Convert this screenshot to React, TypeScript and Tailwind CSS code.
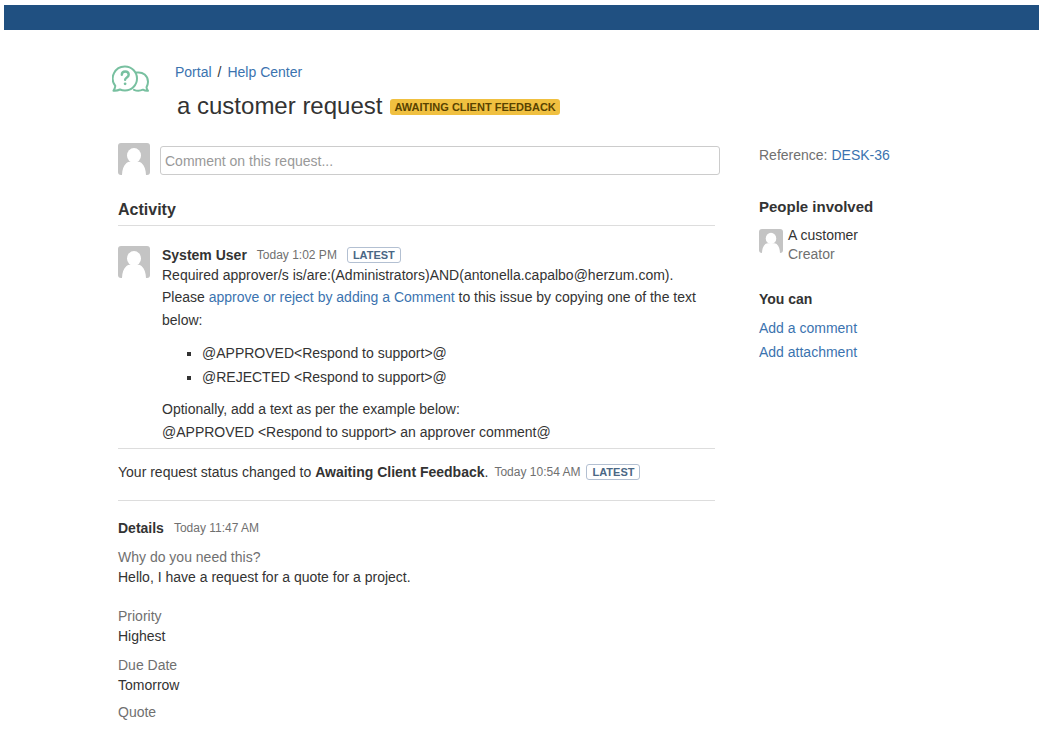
import React from 'react';

interface AvatarProps {
  className: string;
}

const Avatar: React.FC<AvatarProps> = ({ className }) => (
  <svg viewBox="0 0 32 32" className={`shrink-0 rounded-[3px] ${className}`} aria-hidden="true">
    <rect width="32" height="32" fill="#c4c4c4" />
    <ellipse cx="16" cy="12.500" rx="7" ry="7.500" fill="#fff" />
    <path d="M4 32c.2-5 1.500-9.500 4.500-12 1.400-1.100 3-1.300 4.700-1h5.600c1.700-.3 3.300-.1 4.700 1 3 2.500 4.300 7 4.500 12z" fill="#fff" />
  </svg>
);

const PortalLogo: React.FC = () => (
  <svg viewBox="0 0 38 28" className="w-[38px] h-7 shrink-0" fill="none" stroke="#78c0a0" strokeWidth="2" strokeLinejoin="round" strokeLinecap="round" aria-hidden="true">
    <path d="M13 1.500a12 12 0 1 1 0 24c-2 0-3.500-.3-5-1-2 1-4.500 1.400-6.500 1.200 1-1.300 1.600-3 1.800-4.800A12 12 0 0 1 13 1.500z" />
    <path d="M24.500 7.600c6.500-1.200 11.500 3.400 11.500 9.200 0 2-.6 3.800-1.500 5.400.1 1.400.6 2.600 1.500 3.500-1.800.2-3.600-.2-5-1-3 1.300-6.300 1.300-9 .1" />
    <path d="M9.800 9.800c0-4.400 6.900-4.400 6.900 0 0 2.600-3.600 2.600-3.600 5" strokeWidth="2.400" />
    <circle cx="13.100" cy="18.800" r=".7" strokeWidth="1.400" />
  </svg>
);

const Latest: React.FC = () => (
  <span className="rounded-[3px] border border-[#b3c0d2] px-[5px] text-[11px] leading-[14px] font-bold text-[#4a6785]">
    LATEST
  </span>
);

const details = [
  { label: 'Priority', value: 'Highest', gap: 'mt-[19px]' },
  { label: 'Due Date', value: 'Tomorrow', gap: 'mt-[9px]' },
  { label: 'Quote', value: '', gap: 'mt-[7px]' },
];

const App: React.FC = () => {
  return (
    <div className="bg-white text-sm leading-5 text-[#333] [font-family:'Liberation_Sans',Arial,sans-serif]">
      <div className="pt-[5px] pl-1 pr-0.5">
        <div className="h-[25px] bg-[#205081]" />
      </div>

      <div className="pl-28 pr-[120px] pt-8">
        <header className="flex gap-[25px]">
          <div className="pt-[3px]">
            <PortalLogo />
          </div>
          <div>
            <nav className="flex gap-1.5" aria-label="Breadcrumb">
              <a href="#portal" className="text-[#3b73af]">Portal</a>
              <span>/</span>
              <a href="#help" className="text-[#3b73af]">Help Center</a>
            </nav>
            <div className="mt-2.5 flex items-center gap-2 pl-0.5">
              <h1 className="text-2xl leading-7">a customer request</h1>
              <span className="mt-0.5 rounded-[3px] bg-[#f0c040] px-1 text-[11px] leading-4 font-bold text-[#594300]">
                AWAITING CLIENT FEEDBACK
              </span>
            </div>
          </div>
        </header>

        <div className="mt-[23px] flex gap-[39px] pl-1.5">
          <main className="min-w-0 flex-1">
            <form className="flex items-end gap-2.5">
              <Avatar className="size-8" />
              <input
                type="text"
                aria-label="Comment on this request"
                placeholder="Comment on this request..."
                className="h-[29px] min-w-0 flex-1 rounded-[3px] border border-[#ccc] px-1 placeholder:text-[#999] outline-none"
              />
            </form>

            <section className="mr-[5px]">
              <h2 className="mt-[25px] border-b border-[#ddd] pb-[5px] text-base leading-5 font-bold">Activity</h2>

              <article className="mt-5 flex gap-3 border-b border-[#ddd] pb-1">
                <Avatar className="size-8" />
                <div className="min-w-0 flex-1">
                  <div className="flex h-[18px] items-center gap-2.5">
                    <strong>System User</strong>
                    <time className="text-xs text-[#707070]">Today 1:02 PM</time>
                    <Latest />
                  </div>
                  <p className="leading-[22px]">
                    Required approver/s is/are:(Administrators)AND(antonella.capalbo@herzum.com).
                  </p>
                  <p className="leading-[23px]">
                    Please <a href="#comment" className="text-[#3b73af]">approve or reject by adding a Comment</a> to this issue by copying one of the text below:
                  </p>
                  <ul className="mt-[9px] list-[square] pl-10 leading-6">
                    <li>@APPROVED&lt;Respond to support&gt;@</li>
                    <li>@REJECTED &lt;Respond to support&gt;@</li>
                  </ul>
                  <p className="mt-[9px] leading-[23px]">
                    Optionally, add a text as per the example below:
                    <br />
                    @APPROVED &lt;Respond to support&gt; an approver comment@
                  </p>
                </div>
              </article>

              <div className="flex items-center gap-1.5 border-b border-[#ddd] pt-[13px] pb-[18px]">
                <p>
                  Your request status changed to <strong>Awaiting Client Feedback</strong>.
                </p>
                <time className="text-xs text-[#707070]">Today 10:54 AM</time>
                <Latest />
              </div>
            </section>

            <section className="mt-[17px]">
              <div className="flex items-center gap-2.5">
                <h3 className="font-bold">Details</h3>
                <time className="text-xs text-[#707070]">Today 11:47 AM</time>
              </div>
              <dl>
                <div className="mt-[9px]">
                  <dt className="text-[#707070]">Why do you need this?</dt>
                  <dd>Hello, I have a request for a quote for a project.</dd>
                </div>
                {details.map((item) => (
                  <div key={item.label} className={item.gap}>
                    <dt className="text-[#707070]">{item.label}</dt>
                    {item.value && <dd>{item.value}</dd>}
                  </div>
                ))}
              </dl>
            </section>
          </main>

          <aside className="w-[162px] shrink-0 pt-0.5">
            <p className="flex gap-1">
              <span className="text-[#707070]">Reference:</span>
              <a href="#desk-36" className="text-[#3b73af]">DESK-36</a>
            </p>

            <h3 className="mt-8 text-[15px] font-bold">People involved</h3>
            <div className="mt-[9px] flex gap-[5px]">
              <Avatar className="mt-[3px] size-6" />
              <div className="leading-[19px]">
                <p>A customer</p>
                <p className="text-[#707070]">Creator</p>
              </div>
            </div>

            <h3 className="mt-[25px] font-bold">You can</h3>
            <ul className="mt-[7px] leading-6">
              <li><a href="#comment" className="text-[#3b73af]">Add a comment</a></li>
              <li><a href="#attachment" className="text-[#3b73af]">Add attachment</a></li>
            </ul>
          </aside>
        </div>
      </div>
    </div>
  );
};

export default App;
